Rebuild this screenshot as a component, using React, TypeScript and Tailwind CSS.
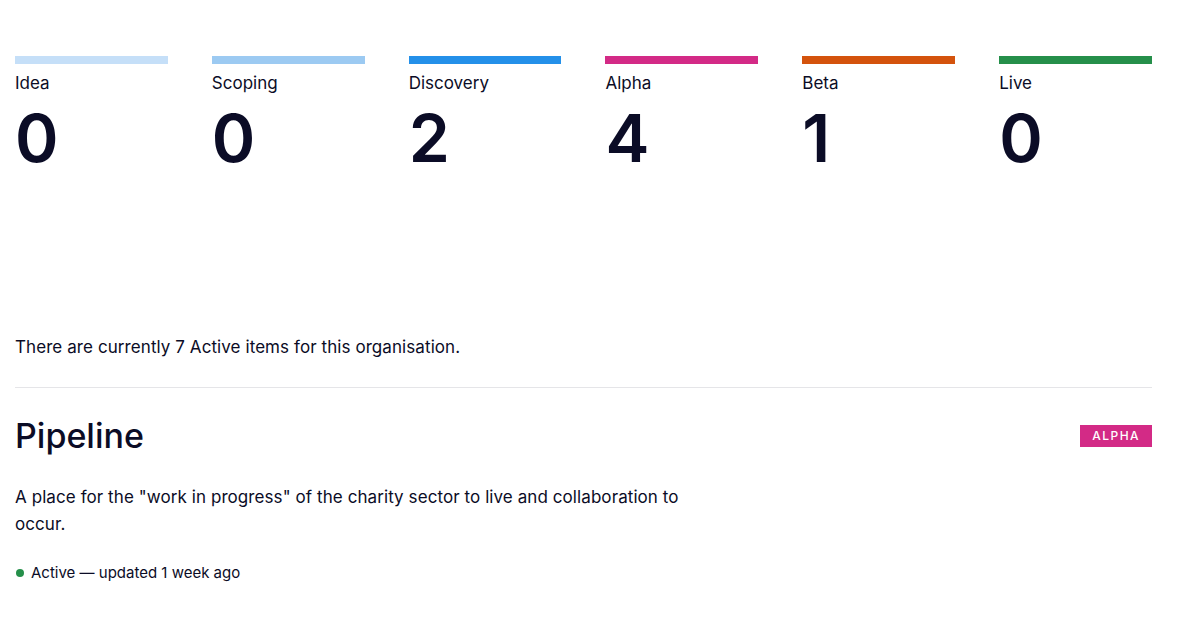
import React from "react";

const stages = [
  { name: "Idea", count: 0, bar: "bg-[#c5dff8]" },
  { name: "Scoping", count: 0, bar: "bg-[#9ccaf2]" },
  { name: "Discovery", count: 2, bar: "bg-[#2490e9]" },
  { name: "Alpha", count: 4, bar: "bg-[#d32a86]" },
  { name: "Beta", count: 1, bar: "bg-[#d4530d]" },
  { name: "Live", count: 0, bar: "bg-[#258f4a]" },
];

function App() {
  return (
    <div className="min-h-screen bg-white text-[#0b0c26] font-['Inter','Liberation_Sans',sans-serif]">
      <div className="w-[1167px] pl-[15px] pr-[15px] pt-[56px]">
        <div className="grid grid-cols-6 gap-x-[44px]">
          {stages.map((s) => (
            <div key={s.name}>
              <div className={`h-[8px] ${s.bar}`} />
              <div className="mt-[7px] text-[17px] leading-[24px]">{s.name}</div>
              <div className="mt-[9px] text-[66px] leading-[68px] font-semibold">{s.count}</div>
            </div>
          ))}
        </div>

        <p className="mt-[162px] text-[17px] leading-[26px] tracking-[0.08px]">
          There are currently 7 Active items for this organisation.
        </p>

        <div className="mt-[27px] border-t border-[#e5e5e8]" />

        <div className="mt-[27px] flex items-start justify-between">
          <h2 className="text-[34px] leading-[42px] font-medium">Pipeline</h2>
          <span className="mt-[10px] bg-[#d32a86] text-white text-[12px] leading-[22px] font-medium tracking-[0.12em] px-[12px]">
            ALPHA
          </span>
        </div>

        <p className="mt-[27px] w-[690px] text-[17px] leading-[27px] tracking-[0.08px]">
          A place for the "work in progress" of the charity sector to live and collaboration to occur.
        </p>

        <div className="mt-[24px] flex items-center gap-[7px] text-[15px] leading-[22px]">
          <span className="ml-[1px] w-[8px] h-[8px] rounded-full bg-[#258f4a]" />
          <span>Active — updated 1 week ago</span>
        </div>
      </div>
    </div>
  );
}

export default App;
